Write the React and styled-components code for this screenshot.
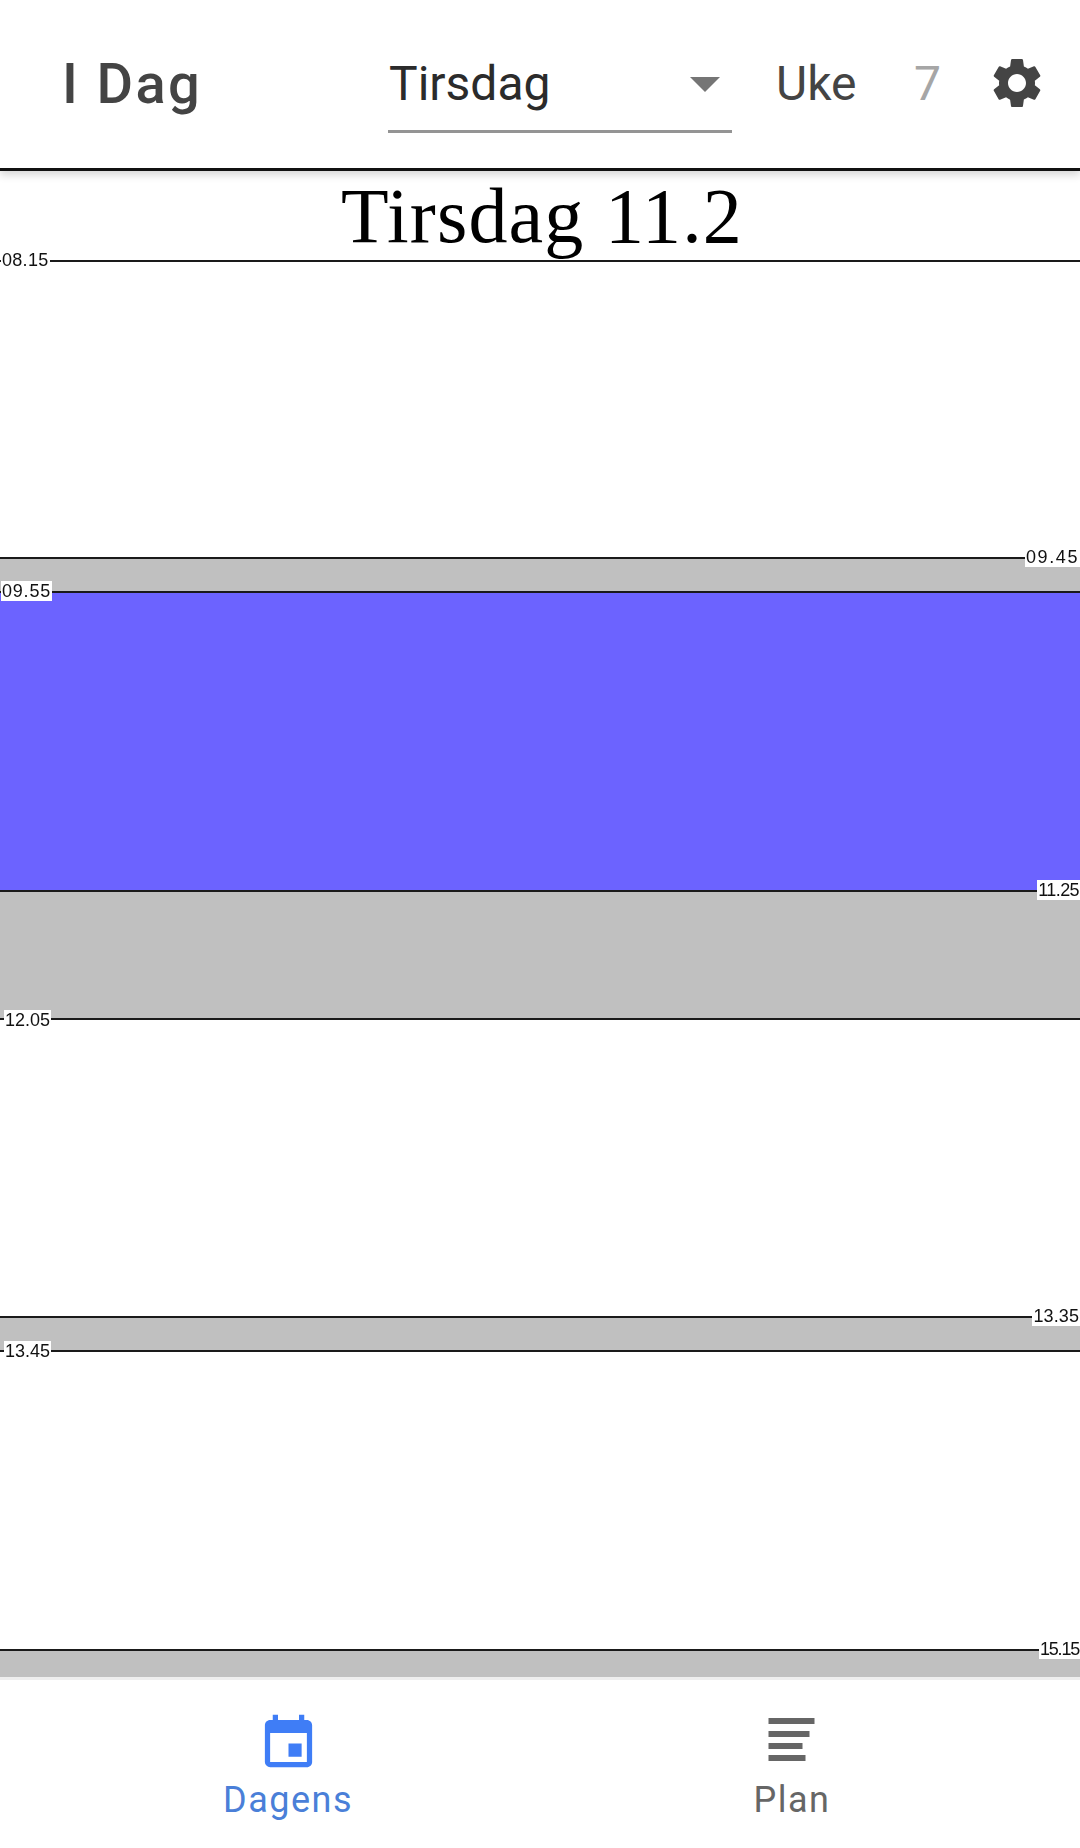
import React from 'react';
import styled, { createGlobalStyle } from 'styled-components';
import { MdArrowDropDown, MdEvent, MdSettings } from 'react-icons/md';

const GlobalStyle = createGlobalStyle`
    html, body {
        margin: 0;
        padding: 0;
        background: #fff;
    }
    * {
        box-sizing: border-box;
    }
`;

const Page = styled.div`
    width: 1080px;
    height: 1848px;
    display: flex;
    flex-direction: column;
    overflow: hidden;
    font-family: Roboto, "Liberation Sans", sans-serif;
`;

const Header = styled.header`
    position: relative;
    z-index: 2;
    height: 171px;
    flex: none;
    display: flex;
    align-items: center;
    padding: 0 8px 3px 62px;
    background: #fff;
    border-bottom: 3px solid #111;
    box-shadow: 0 4px 8px rgba(0, 0, 0, 0.16);
`;

const Title = styled.h1`
    width: 326px;
    margin: 2px 0 0;
    font-size: 56px;
    font-weight: 500;
    letter-spacing: 2.4px;
    color: #444;
`;

const Dropdown = styled.div`
    width: 344px;
    height: 90px;
    margin-top: 10px;
    display: flex;
    align-items: center;
    justify-content: space-between;
    padding: 0 0 6px 1px;
    border-bottom: 3px solid #949494;
    font-size: 48px;
    color: #2b2b2b;

    svg {
        width: 72px;
        height: 72px;
        margin-right: -9px;
        color: #757575;
    }
`;

const Week = styled.span`
    width: ${p => p.$width}px;
    margin: 2px 0 0 ${p => p.$gap}px;
    font-size: 48px;
    color: ${p => p.$muted ? '#a6a6a6' : '#444'};
`;

const SettingsButton = styled.div`
    display: flex;
    margin-left: auto;
    margin-right: 25px;
    color: #444;

    svg {
        width: 60px;
        height: 60px;
    }
`;

const Schedule = styled.main`
    flex: 1;
    display: flex;
    flex-direction: column;
    background: #fff;
`;

const DayTitle = styled.div`
    height: 89px;
    flex: none;
    text-align: center;
    font-family: "Liberation Serif", serif;
    font-size: 78px;
    line-height: 90px;
    letter-spacing: 1.1px;
    color: #000;
    padding-left: 4px;
    filter: blur(0.5px);
`;

const colors = {
    free: '#fff',
    pause: '#c0c0c0',
    lesson: '#6c63ff',
};

const Block = styled.div`
    position: relative;
    height: ${p => p.$height}px;
    flex: none;
    background: ${p => colors[p.$kind]};
    border-top: 2px solid #1a1a1a;
`;

const TimeLabel = styled.span`
    position: absolute;
    top: ${p => p.$top}px;
    ${p => p.$side}: ${p => p.$offset}px;
    padding: 0 1px;
    background: #fff;
    font-family: "Liberation Sans", sans-serif;
    font-size: 18px;
    line-height: 20px;
    letter-spacing: ${p => p.$spacing}px;
    color: #111;
    filter: blur(0.4px);
`;

const NavBar = styled.nav`
    height: 171px;
    flex: none;
    display: flex;
    padding: 0 36px;
    border-top: 3px solid #eee;
    background: #fff;
`;

const NavItem = styled.div`
    flex: 1;
    display: flex;
    flex-direction: column;
    align-items: center;
    padding-top: 32px;
    color: ${p => p.$active ? '#3f7df6' : '#666'};

    svg {
        width: 63px;
        height: 63px;
    }
`;

const NavLabel = styled.span`
    margin-top: 4px;
    font-size: 36px;
    line-height: 42px;
    letter-spacing: 1.5px;
    color: ${p => p.$active ? '#4a7fd8' : '#666'};
`;

const blocks = [
    { kind: 'free', height: 297, time: '08.15', side: 'left', offset: 1, spacing: 0.3, top: -12 },
    { kind: 'pause', height: 34, time: '09.45', side: 'right', offset: 0, spacing: 1.6, top: -12 },
    { kind: 'lesson', height: 299, time: '09.55', side: 'left', offset: 1, spacing: 0.8, top: -12 },
    { kind: 'pause', height: 128, time: '11.25', side: 'right', offset: 0, spacing: -0.6, top: -12 },
    { kind: 'free', height: 298, time: '12.05', side: 'left', offset: 4, spacing: 0, top: -10 },
    { kind: 'pause', height: 34, time: '13.35', side: 'right', offset: 0, spacing: 0.1, top: -12 },
    { kind: 'free', height: 299, time: '13.45', side: 'left', offset: 4, spacing: 0, top: -11 },
    { kind: 'pause', height: 28, time: '15.15', side: 'right', offset: 0, spacing: -1.2, top: -12 },
];

const PlanIcon = () => (
    <svg viewBox="0 0 63 63" fill="currentColor">
        <rect x="7.5" y="6" width="46" height="6" />
        <rect x="7.5" y="19" width="41" height="6" />
        <rect x="7.5" y="31" width="34" height="6" />
        <rect x="7.5" y="43" width="37" height="6" />
    </svg>
);

export default function App() {
    return (
        <Page>
            <GlobalStyle />
            <Header>
                <Title>I Dag</Title>
                <Dropdown>
                    Tirsdag
                    <MdArrowDropDown />
                </Dropdown>
                <Week $width={138} $gap={44}>Uke</Week>
                <Week $width={30} $gap={0} $muted>7</Week>
                <SettingsButton>
                    <MdSettings />
                </SettingsButton>
            </Header>
            <Schedule>
                <DayTitle>Tirsdag 11.2</DayTitle>
                {blocks.map(b => (
                    <Block key={b.time} $kind={b.kind} $height={b.height}>
                        <TimeLabel $side={b.side} $offset={b.offset} $spacing={b.spacing} $top={b.top}>{b.time}</TimeLabel>
                    </Block>
                ))}
            </Schedule>
            <NavBar>
                <NavItem $active>
                    <MdEvent />
                    <NavLabel $active>Dagens</NavLabel>
                </NavItem>
                <NavItem>
                    <PlanIcon />
                    <NavLabel>Plan</NavLabel>
                </NavItem>
            </NavBar>
        </Page>
    );
}
